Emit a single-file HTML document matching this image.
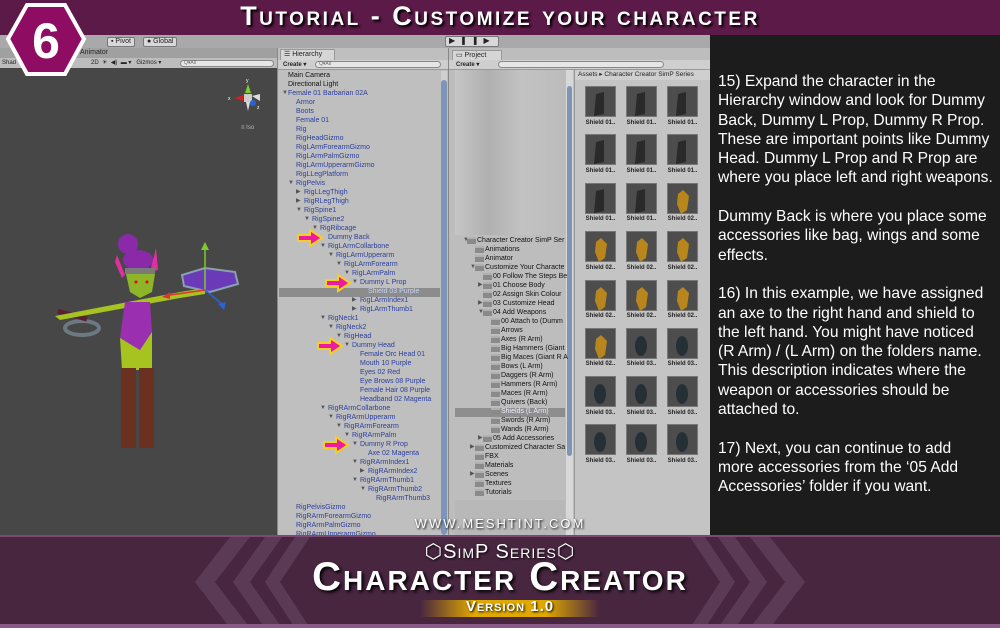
<!DOCTYPE html>
<html><head><meta charset="utf-8"><style>
*{margin:0;padding:0;box-sizing:border-box}
body{width:1000px;height:628px;overflow:hidden;background:#a8a8a8;font-family:"Liberation Sans",sans-serif;position:relative}
.a{position:absolute}
.r{position:absolute;height:9px;line-height:9px;font-size:7px;color:#2b3f9e;white-space:nowrap}
.r i{position:absolute;left:-8px;font-style:normal;font-size:6px;color:#555}
.k{color:#111}
.p{position:absolute;height:9px;line-height:9px;font-size:7px;color:#111;white-space:nowrap}
.p i{position:absolute;left:-15px;font-style:normal;font-size:6px;color:#555}
.p b{position:absolute;left:-10px;top:1px;width:9px;height:7px;background:#8a8a8a;border-top:2px solid #b0b0b0}
.th{position:absolute;width:31px;height:31px;background:#4d4d4d;border:1px solid #777}
.lb{position:absolute;width:41px;font-size:6px;font-weight:bold;color:#222;text-align:center}
.tx{position:absolute;left:718px;top:72px;color:#fff;font-size:15.6px;line-height:19.3px;white-space:pre}
.btn{position:absolute;height:10px;background:#d8d8d8;border:1px solid #777;border-radius:2px;font-size:7px;line-height:8px;color:#222;padding:0 3px}
</style></head><body>
<!-- top bar -->
<div class="a" style="left:0;top:0;width:1000px;height:35px;background:#5b1a47"></div>
<div class="a" style="left:0;top:1px;width:1000px;text-align:center;font-size:27px;font-weight:bold;color:#fff;font-variant:small-caps;letter-spacing:2.5px;text-shadow:2px 2px 2px #000">Tutorial - Customize your character</div>
<!-- unity toolbar -->
<div class="a" style="left:0;top:35px;width:710px;height:13px;background:#a9a9a9"></div>
<div class="btn" style="left:107px;top:37px">▪ Pivot</div>
<div class="btn" style="left:143px;top:37px">● Global</div>
<div class="btn" style="left:445px;top:36px;width:54px;height:11px;font-size:8px;letter-spacing:5px">▶❚❚▶</div>
<!-- scene area -->
<div class="a" style="left:0;top:48px;width:277px;height:10px;background:#a0a0a0;font-size:7px;color:#222;padding-left:80px;line-height:10px">Animator</div>
<div class="a" style="left:0;top:58px;width:277px;height:10px;background:#bdbdbd;font-size:6px;color:#222;line-height:10px;padding-left:2px">Shad&nbsp;&nbsp;&nbsp;&nbsp;&nbsp;&nbsp;&nbsp;&nbsp;&nbsp;&nbsp;&nbsp;&nbsp;&nbsp;&nbsp;&nbsp;&nbsp;&nbsp;&nbsp;&nbsp;&nbsp;&nbsp;&nbsp;&nbsp;&nbsp;&nbsp;&nbsp;&nbsp;&nbsp;&nbsp;&nbsp;&nbsp;&nbsp;&nbsp;&nbsp;&nbsp;&nbsp;&nbsp;&nbsp;&nbsp;&nbsp;&nbsp;&nbsp;&nbsp;&nbsp;&nbsp;2D &nbsp;☀ &nbsp;◀) &nbsp;▬ ▾ &nbsp;&nbsp;Gizmos ▾</div>
<div class="a" style="left:180px;top:60px;width:94px;height:7px;background:#e6e6e6;border:1px solid #888;border-radius:4px;font-size:5px;color:#666;padding-left:3px;line-height:5px">Q▾All</div>
<div class="a" style="left:0;top:68px;width:277px;height:467px;background:#474747"></div>
<svg class="a" style="left:0;top:68px" width="277" height="467">
<g transform="translate(248,30)"><rect x="-4" y="-4" width="8" height="8" fill="#ccc"/><polygon points="-3,-5 3,-5 0,-14" fill="#7ccc2a"/><polygon points="-5,-3 -5,3 -14,0" fill="#c22"/><circle cx="5" cy="5" r="3" fill="#2a63d8"/><polygon points="4,-2 12,-4 12,3" fill="#ddd"/><polygon points="-2,4 2,4 0,13" fill="#ddd"/><text x="-2" y="-16" font-size="5" fill="#fff">y</text><text x="-20" y="2" font-size="5" fill="#fff">x</text><text x="9" y="11" font-size="5" fill="#fff">z</text></g>
<text x="241" y="61" font-size="6" fill="#bbb">≡ Iso</text>
<g transform="translate(0,152)">
<ellipse cx="82" cy="108" rx="17" ry="7" fill="none" stroke="#6b7a80" stroke-width="4"/>
<rect x="58" y="92" width="30" height="5" fill="#5a2030" transform="rotate(15 70 93)"/>
<polygon points="55,96 180,72 180,78 60,100" fill="#a6c320"/>
<polygon points="180,72 205,68 205,74 180,78" fill="#a6c320"/>
<ellipse cx="128" cy="24" rx="10" ry="10" fill="#8a2aa8"/>
<ellipse cx="138" cy="40" rx="15" ry="10" fill="#8a2aa8"/>
<polygon points="117,35 125,55 122,58 115,42" fill="#e030a0"/>
<polygon points="156,28 158,50 150,52" fill="#e030a0"/>
<rect x="125" y="48" width="30" height="6" fill="#7a7a7a"/>
<polygon points="126,54 155,54 152,72 140,78 130,72" fill="#8db527"/>
<circle cx="136" cy="62" r="1.5" fill="#e00"/><circle cx="147" cy="62" r="1.5" fill="#e00"/>
<polygon points="125,82 150,82 152,112 140,130 120,118" fill="#9a2fb0"/>
<polygon points="120,118 140,130 140,150 122,150" fill="#a6c320"/>
<polygon points="140,130 152,112 152,150 140,150" fill="#a6c320"/>
<rect x="121" y="148" width="15" height="80" fill="#6a3020"/>
<rect x="139" y="148" width="15" height="80" fill="#6a3020"/>
<polygon points="182,55 205,48 235,52 238,64 210,72 184,66" fill="#6a3ab8" stroke="#8aa0b0" stroke-width="2"/>
<line x1="205" y1="70" x2="205" y2="28" stroke="#7ccc2a" stroke-width="1.5"/><polygon points="201,30 209,30 205,22" fill="#7ccc2a"/>
<line x1="205" y1="70" x2="170" y2="75" stroke="#d33" stroke-width="1.5"/><polygon points="162,77 170,72 170,79" fill="#d33"/>
<line x1="205" y1="70" x2="222" y2="84" stroke="#2a63d8" stroke-width="1.5"/><polygon points="218,84 226,82 224,90" fill="#2a63d8"/>
</g>
</svg>
<!-- hierarchy -->
<div class="a" style="left:277px;top:48px;width:172px;height:487px;background:#bfbfbf;border-left:1px solid #888;border-right:1px solid #888"></div>
<div class="a" style="left:280px;top:49px;width:55px;height:11px;background:#d6d6d6;border:1px solid #999;border-bottom:0;font-size:7px;line-height:10px;padding-left:3px;color:#222">☰ Hierarchy</div>
<div class="a" style="left:278px;top:60px;width:170px;height:10px;background:#cfcfcf;border-bottom:1px solid #999;font-size:6px;line-height:10px;padding-left:5px;color:#222;font-weight:bold">Create ▾</div>
<div class="a" style="left:315px;top:61px;width:126px;height:7px;background:#e6e6e6;border:1px solid #888;border-radius:4px;font-size:5px;color:#666;padding-left:3px;line-height:5px">Q▾All</div>
<div class="a" style="left:441px;top:71px;width:6px;height:464px;background:#d0d0d0"></div>
<div class="a" style="left:441px;top:80px;width:6px;height:455px;background:#7d95b8;border-radius:3px"></div>
<div class="a" style="left:279px;top:288px;width:161px;height:9px;background:#8c8c8c"></div>
<div class="r k" style="top:71px;left:288px">Main Camera</div>
<div class="r k" style="top:80px;left:288px">Directional Light</div>
<div class="r" style="top:89px;left:288px"><i style="left:-6px">▼</i>Female 01 Barbarian 02A</div>
<div class="r" style="top:98px;left:296px">Armor</div>
<div class="r" style="top:107px;left:296px">Boots</div>
<div class="r" style="top:116px;left:296px">Female 01</div>
<div class="r" style="top:125px;left:296px">Rig</div>
<div class="r" style="top:134px;left:296px">RigHeadGizmo</div>
<div class="r" style="top:143px;left:296px">RigLArmForearmGizmo</div>
<div class="r" style="top:152px;left:296px">RigLArmPalmGizmo</div>
<div class="r" style="top:161px;left:296px">RigLArmUpperarmGizmo</div>
<div class="r" style="top:170px;left:296px">RigLLegPlatform</div>
<div class="r" style="top:179px;left:296px"><i>▼</i>RigPelvis</div>
<div class="r" style="top:188px;left:304px"><i>▶</i>RigLLegThigh</div>
<div class="r" style="top:197px;left:304px"><i>▶</i>RigRLegThigh</div>
<div class="r" style="top:206px;left:304px"><i>▼</i>RigSpine1</div>
<div class="r" style="top:215px;left:312px"><i>▼</i>RigSpine2</div>
<div class="r" style="top:224px;left:320px"><i>▼</i>RigRibcage</div>
<div class="r" style="top:233px;left:328px">Dummy Back</div>
<div class="r" style="top:242px;left:328px"><i>▼</i>RigLArmCollarbone</div>
<div class="r" style="top:251px;left:336px"><i>▼</i>RigLArmUpperarm</div>
<div class="r" style="top:260px;left:344px"><i>▼</i>RigLArmForearm</div>
<div class="r" style="top:269px;left:352px"><i>▼</i>RigLArmPalm</div>
<div class="r" style="top:278px;left:360px"><i>▼</i>Dummy L Prop</div>
<div class="r" style="top:287px;left:368px;color:#c8d4f4">Shield 03 Purple</div>
<div class="r" style="top:296px;left:360px"><i>▶</i>RigLArmIndex1</div>
<div class="r" style="top:305px;left:360px"><i>▶</i>RigLArmThumb1</div>
<div class="r" style="top:314px;left:328px"><i>▼</i>RigNeck1</div>
<div class="r" style="top:323px;left:336px"><i>▼</i>RigNeck2</div>
<div class="r" style="top:332px;left:344px"><i>▼</i>RigHead</div>
<div class="r" style="top:341px;left:352px"><i>▼</i>Dummy Head</div>
<div class="r" style="top:350px;left:360px">Female Orc Head 01</div>
<div class="r" style="top:359px;left:360px">Mouth 10 Purple</div>
<div class="r" style="top:368px;left:360px">Eyes 02 Red</div>
<div class="r" style="top:377px;left:360px">Eye Brows 08 Purple</div>
<div class="r" style="top:386px;left:360px">Female Hair 08 Purple</div>
<div class="r" style="top:395px;left:360px">Headband 02 Magenta</div>
<div class="r" style="top:404px;left:328px"><i>▼</i>RigRArmCollarbone</div>
<div class="r" style="top:413px;left:336px"><i>▼</i>RigRArmUpperarm</div>
<div class="r" style="top:422px;left:344px"><i>▼</i>RigRArmForearm</div>
<div class="r" style="top:431px;left:352px"><i>▼</i>RigRArmPalm</div>
<div class="r" style="top:440px;left:360px"><i>▼</i>Dummy R Prop</div>
<div class="r" style="top:449px;left:368px">Axe 02 Magenta</div>
<div class="r" style="top:458px;left:360px"><i>▼</i>RigRArmIndex1</div>
<div class="r" style="top:467px;left:368px"><i>▶</i>RigRArmIndex2</div>
<div class="r" style="top:476px;left:360px"><i>▼</i>RigRArmThumb1</div>
<div class="r" style="top:485px;left:368px"><i>▼</i>RigRArmThumb2</div>
<div class="r" style="top:494px;left:376px">RigRArmThumb3</div>
<div class="r" style="top:503px;left:296px">RigPelvisGizmo</div>
<div class="r" style="top:512px;left:296px">RigRArmForearmGizmo</div>
<div class="r" style="top:521px;left:296px">RigRArmPalmGizmo</div>
<div class="r" style="top:530px;left:296px">RigRArmUpperarmGizmo</div>
<svg class="a" style="left:0;top:0" width="450" height="535">
<defs><polygon id="ar" points="0,-3 12,-3 12,-8 24,0 12,8 12,3 0,3" fill="#ee1aa0" stroke="#f5d020" stroke-width="2"/></defs>
<use href="#ar" x="298" y="238"/><use href="#ar" x="326" y="283"/><use href="#ar" x="318" y="346"/><use href="#ar" x="324" y="445"/>
</svg>
<!-- project -->
<div class="a" style="left:449px;top:48px;width:261px;height:487px;background:#bdbdbd"></div>
<div class="a" style="left:452px;top:50px;width:50px;height:10px;background:#d6d6d6;border:1px solid #999;border-bottom:0;font-size:7px;line-height:9px;padding-left:3px;color:#222">▭ Project</div>
<div class="a" style="left:449px;top:60px;width:261px;height:10px;background:#cfcfcf;border-bottom:1px solid #999;font-size:6px;line-height:10px;padding-left:7px;color:#222;font-weight:bold">Create ▾</div>
<div class="a" style="left:498px;top:61px;width:166px;height:7px;background:#e6e6e6;border:1px solid #888;border-radius:4px"></div>
<div class="a" style="left:455px;top:70px;width:110px;height:165px;background:linear-gradient(90deg,#c6c6c6,#b0b0b0 30%,#c2c2c2 60%,#bcbcbc)"></div>
<div class="a" style="left:455px;top:500px;width:110px;height:35px;background:#b8b8b8"></div>
<div class="a" style="left:566px;top:70px;width:7px;height:465px;background:#d8d8d8"></div>
<div class="a" style="left:567px;top:86px;width:5px;height:370px;background:#7d95b8;border-radius:3px"></div>
<div class="a" style="left:455px;top:408px;width:110px;height:9px;background:#8e8e8e"></div>
<div class="p" style="top:236px;left:477px"><i style="left:-14px">▼</i><b></b>Character Creator SimP Ser</div>
<div class="p" style="top:245px;left:485px"><b></b>Animations</div>
<div class="p" style="top:254px;left:485px"><b></b>Animator</div>
<div class="p" style="top:263px;left:485px"><i>▼</i><b></b>Customize Your Characte</div>
<div class="p" style="top:272px;left:493px"><b></b>00 Follow The Steps Be</div>
<div class="p" style="top:281px;left:493px"><i>▶</i><b></b>01 Choose Body</div>
<div class="p" style="top:290px;left:493px"><b></b>02 Assign Skin Colour</div>
<div class="p" style="top:299px;left:493px"><i>▶</i><b></b>03 Customize Head</div>
<div class="p" style="top:308px;left:493px"><i>▼</i><b></b>04 Add Weapons</div>
<div class="p" style="top:317px;left:501px"><b></b>00 Attach to (Dumm</div>
<div class="p" style="top:326px;left:501px"><b></b>Arrows</div>
<div class="p" style="top:335px;left:501px"><b></b>Axes (R Arm)</div>
<div class="p" style="top:344px;left:501px"><b></b>Big Hammers (Giant</div>
<div class="p" style="top:353px;left:501px"><b></b>Big Maces (Giant R A</div>
<div class="p" style="top:362px;left:501px"><b></b>Bows (L Arm)</div>
<div class="p" style="top:371px;left:501px"><b></b>Daggers (R Arm)</div>
<div class="p" style="top:380px;left:501px"><b></b>Hammers (R Arm)</div>
<div class="p" style="top:389px;left:501px"><b></b>Maces (R Arm)</div>
<div class="p" style="top:398px;left:501px"><b></b>Quivers (Back)</div>
<div class="p" style="top:407px;left:501px;color:#eef"><b></b>Shields (L Arm)</div>
<div class="p" style="top:416px;left:501px"><b></b>Swords (R Arm)</div>
<div class="p" style="top:425px;left:501px"><b></b>Wands (R Arm)</div>
<div class="p" style="top:434px;left:493px"><i>▶</i><b></b>05 Add Accessories</div>
<div class="p" style="top:443px;left:485px"><i>▶</i><b></b>Customized Character Sa</div>
<div class="p" style="top:452px;left:485px"><b></b>FBX</div>
<div class="p" style="top:461px;left:485px"><b></b>Materials</div>
<div class="p" style="top:470px;left:485px"><i>▶</i><b></b>Scenes</div>
<div class="p" style="top:479px;left:485px"><b></b>Textures</div>
<div class="p" style="top:488px;left:485px"><b></b>Tutorials</div>
<!-- asset grid -->
<div class="a" style="left:574px;top:70px;width:136px;height:465px;background:#c4c4c4;border-left:1px solid #999"></div>
<div class="a" style="left:575px;top:70px;width:135px;height:10px;font-size:6.5px;line-height:10px;color:#222;padding-left:3px;background:#cfcfcf;white-space:nowrap;overflow:hidden">Assets ▸ Character Creator SimP Series</div>
<div class="a" style="left:575px;top:80px;width:135px;height:430px">
<div class="th" style="left:10px;top:6px"></div><div class="th" style="left:51px;top:6px"></div><div class="th" style="left:92px;top:6px"></div>
<div class="lb" style="left:5px;top:40px">Shield 01..</div><div class="lb" style="left:46px;top:40px">Shield 01..</div><div class="lb" style="left:87px;top:40px">Shield 01..</div>
<div class="th" style="left:10px;top:54px"></div><div class="th" style="left:51px;top:54px"></div><div class="th" style="left:92px;top:54px"></div>
<div class="lb" style="left:5px;top:88px">Shield 01..</div><div class="lb" style="left:46px;top:88px">Shield 01..</div><div class="lb" style="left:87px;top:88px">Shield 01..</div>
<div class="th" style="left:10px;top:103px"></div><div class="th" style="left:51px;top:103px"></div><div class="th" style="left:92px;top:103px"></div>
<div class="lb" style="left:5px;top:136px">Shield 01..</div><div class="lb" style="left:46px;top:136px">Shield 01..</div><div class="lb" style="left:87px;top:136px">Shield 02..</div>
<div class="th" style="left:10px;top:151px"></div><div class="th" style="left:51px;top:151px"></div><div class="th" style="left:92px;top:151px"></div>
<div class="lb" style="left:5px;top:185px">Shield 02..</div><div class="lb" style="left:46px;top:185px">Shield 02..</div><div class="lb" style="left:87px;top:185px">Shield 02..</div>
<div class="th" style="left:10px;top:200px"></div><div class="th" style="left:51px;top:200px"></div><div class="th" style="left:92px;top:200px"></div>
<div class="lb" style="left:5px;top:233px">Shield 02..</div><div class="lb" style="left:46px;top:233px">Shield 02..</div><div class="lb" style="left:87px;top:233px">Shield 02..</div>
<div class="th" style="left:10px;top:248px"></div><div class="th" style="left:51px;top:248px"></div><div class="th" style="left:92px;top:248px"></div>
<div class="lb" style="left:5px;top:281px">Shield 02..</div><div class="lb" style="left:46px;top:281px">Shield 03..</div><div class="lb" style="left:87px;top:281px">Shield 03..</div>
<div class="th" style="left:10px;top:296px"></div><div class="th" style="left:51px;top:296px"></div><div class="th" style="left:92px;top:296px"></div>
<div class="lb" style="left:5px;top:330px">Shield 03..</div><div class="lb" style="left:46px;top:330px">Shield 03..</div><div class="lb" style="left:87px;top:330px">Shield 03..</div>
<div class="th" style="left:10px;top:344px"></div><div class="th" style="left:51px;top:344px"></div><div class="th" style="left:92px;top:344px"></div>
<div class="lb" style="left:5px;top:378px">Shield 03..</div><div class="lb" style="left:46px;top:378px">Shield 03..</div><div class="lb" style="left:87px;top:378px">Shield 03..</div>
</div>
<svg class="a" style="left:575px;top:80px" width="135" height="430">
<g fill="#2a2a2a">
<polygon points="21,14 29,12 29,34 19,36"/><polygon points="62,14 70,12 70,34 60,36"/><polygon points="103,14 111,12 111,34 101,36"/>
<polygon points="21,62 29,60 29,82 19,84"/><polygon points="62,62 70,60 70,82 60,84"/><polygon points="103,62 111,60 111,82 101,84"/>
<polygon points="21,111 29,109 29,131 19,133"/><polygon points="62,111 70,109 70,131 60,133"/>
</g>
<g fill="#b8861c"><polygon points="108,110 114,116 112,130 106,134 102,124 103,114"/>
<polygon points="26,158 32,164 30,178 24,182 20,172 21,162"/><polygon points="67,158 73,164 71,178 65,182 61,172 62,162"/><polygon points="108,158 114,164 112,178 106,182 102,172 103,162"/>
<polygon points="26,207 32,213 30,227 24,231 20,221 21,211"/><polygon points="67,207 73,213 71,227 65,231 61,221 62,211"/><polygon points="108,207 114,213 112,227 106,231 102,221 103,211"/>
<polygon points="26,255 32,261 30,275 24,279 20,269 21,259"/></g>
<g fill="#253036"><ellipse cx="66" cy="266" rx="6" ry="10"/><ellipse cx="107" cy="266" rx="6" ry="10"/>
<ellipse cx="25" cy="314" rx="6" ry="10"/><ellipse cx="66" cy="314" rx="6" ry="10"/><ellipse cx="107" cy="314" rx="6" ry="10"/>
<ellipse cx="25" cy="362" rx="6" ry="10"/><ellipse cx="66" cy="362" rx="6" ry="10"/><ellipse cx="107" cy="362" rx="6" ry="10"/></g>
</svg>
<!-- text panel -->
<div class="a" style="left:710px;top:35px;width:290px;height:500px;background:#1c1c1c"></div>
<div class="tx">15) Expand the character in the
Hierarchy window and look for Dummy
Back, Dummy L Prop, Dummy R Prop.
These are important points like Dummy
Head. Dummy L Prop and R Prop are
where you place left and right weapons.

Dummy Back is where you place some
accessories like bag, wings and some
effects.

16) In this example, we have assigned
an axe to the right hand and shield to
the left hand. You might have noticed
(R Arm) / (L Arm) on the folders name.
This description indicates where the
weapon or accessories should be
attached to.

17) Next, you can continue to add
more accessories from the ‘05 Add
Accessories’ folder if you want.</div>
<!-- website -->
<div class="a" style="left:400px;top:516px;width:200px;text-align:center;font-size:13px;color:#fff;letter-spacing:2px;text-shadow:1px 1px 2px #000">WWW.MESHTINT.COM</div>
<!-- hex badge -->
<svg class="a" style="left:5px;top:2px" width="82" height="76"><polygon points="22,3 60,3 79,37 60,72 22,72 3,37" fill="#8e0c62" stroke="#fff" stroke-width="4"/><text x="41" y="56" text-anchor="middle" font-family="Liberation Sans" font-weight="bold" font-size="50" fill="#fff">6</text></svg>
<!-- bottom banner -->
<div class="a" style="left:0;top:535px;width:1000px;height:93px;background:#482640;border-top:2px solid #7a4a70"></div>
<svg class="a" style="left:0;top:537px" width="1000" height="91">
<g fill="#5a3a55"><polygon points="230,0 250,0 215,45 250,91 230,91 195,45"/><polygon points="265,0 282,0 250,45 282,91 265,91 233,45"/><polygon points="295,0 310,0 280,45 310,91 295,91 265,45"/>
<polygon points="770,0 750,0 785,45 750,91 770,91 805,45"/><polygon points="735,0 718,0 750,45 718,91 735,91 767,45"/><polygon points="705,0 690,0 720,45 690,91 705,91 735,45"/></g>
<rect x="0" y="87" width="1000" height="4" fill="#8a5a88"/>
</svg>
<div class="a" style="left:0;top:539px;width:1000px;text-align:center;font-size:20px;color:#fff;font-variant:small-caps;letter-spacing:1px;text-shadow:1px 1px 2px #000">⬡SimP Series⬡</div>
<div class="a" style="left:0;top:555px;width:1000px;text-align:center;font-size:40px;font-weight:bold;color:#fff;font-variant:small-caps;letter-spacing:2px;text-shadow:2px 2px 3px #000">Character Creator</div>
<div class="a" style="left:420px;top:600px;width:180px;height:17px;background:linear-gradient(90deg,rgba(200,150,0,0),#e0a800 30%,#e0a800 70%,rgba(200,150,0,0))"></div>
<div class="a" style="left:420px;top:598px;width:180px;text-align:center;font-size:15px;font-weight:bold;color:#fff;font-variant:small-caps;letter-spacing:1px;text-shadow:1px 1px 2px #000">Version 1.0</div>
</body></html>
